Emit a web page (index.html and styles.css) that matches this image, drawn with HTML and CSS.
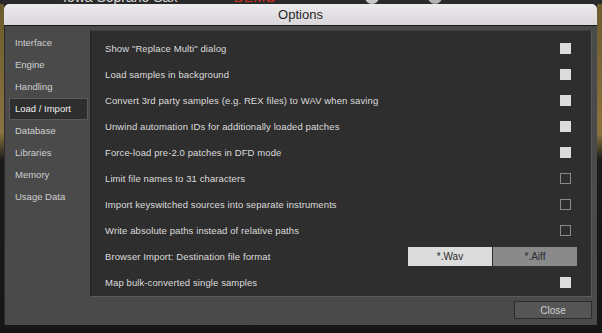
FILE: index.html
```html
<!DOCTYPE html>
<html lang="en">
<head>
  <meta charset="UTF-8">
  <title>Options</title>
  <link rel="stylesheet" href="styles.css">
</head>
<body>
  <div class="backdrop">
    <span class="bd-name">Iowa Soprano Sax</span>
    <span class="bd-demo">DEMO</span>
    <span class="bd-knob"></span>
    <span class="bd-knob second"></span>
    <span class="bd-tune">Tune</span>
  </div>

  <div class="window">
    <div class="titlebar">Options</div>
    <div class="window-body">
      <div class="main">
        <ul class="sidebar">
          <li>Interface</li>
          <li>Engine</li>
          <li>Handling</li>
          <li class="active">Load / Import</li>
          <li>Database</li>
          <li>Libraries</li>
          <li>Memory</li>
          <li>Usage Data</li>
        </ul>

        <div class="panel">
          <div class="row"><span>Show "Replace Multi" dialog</span><span class="check on"></span></div>
          <div class="row"><span>Load samples in background</span><span class="check on"></span></div>
          <div class="row"><span>Convert 3rd party samples (e.g. REX files) to WAV when saving</span><span class="check on"></span></div>
          <div class="row"><span>Unwind automation IDs for additionally loaded patches</span><span class="check on"></span></div>
          <div class="row"><span>Force-load pre-2.0 patches in DFD mode</span><span class="check on"></span></div>
          <div class="row"><span>Limit file names to 31 characters</span><span class="check"></span></div>
          <div class="row"><span>Import keyswitched sources into separate instruments</span><span class="check"></span></div>
          <div class="row"><span>Write absolute paths instead of relative paths</span><span class="check"></span></div>
          <div class="row format"><span>Browser Import: Destination file format</span>
            <div class="segmented">
              <button class="seg selected">*.Wav</button>
              <button class="seg">*.Aiff</button>
            </div>
          </div>
          <div class="row"><span>Map bulk-converted single samples</span><span class="check on"></span></div>
        </div>
      </div>

      <div class="footer">
        <button class="close">Close</button>
      </div>
    </div>
  </div>
</body>
</html>
```

FILE: styles.css
```css
body {
  margin: 0;
  width: 602px;
  height: 333px;
  overflow: hidden;
  background: linear-gradient(to bottom, #6b5a2c 0, #8a7440 40%, #1b1b1b 48%, #161616 100%);
  font-family: "Liberation Sans", Arial, sans-serif;
  position: relative;
}
.backdrop {
  height: 4px;
  overflow: hidden;
  background: #2a2a2a;
  position: relative;
  font-size: 14px;
  line-height: 14px;
}
.bd-name {
  position: absolute;
  left: 63px;
  top: -10px;
  color: #d8d8d8;
}
.bd-demo {
  position: absolute;
  left: 234px;
  top: -10px;
  color: #d03020;
}
.bd-knob {
  position: absolute;
  left: 365px;
  top: -10px;
  width: 14px;
  height: 14px;
  border-radius: 50%;
  background: #c8c8c8;
}
.bd-knob.second {
  left: 428px;
  background: #b0b0b0;
}
.bd-tune {
  position: absolute;
  left: 465px;
  top: -8px;
  font-size: 10px;
  line-height: 10px;
  color: #ddd;
}
.window {
  margin-left: 4px;
  width: 593px;
  background: #111;
}
.titlebar {
  height: 21px;
  line-height: 22px;
  text-align: center;
  font-size: 13px;
  color: #262626;
  background: linear-gradient(#eceaec, #d9d7d9);
  border-radius: 5px 5px 0 0;
  border-bottom: 1px solid #1a1a1a;
}
.window-body {
  background: #4a4a4a;
  border-left: 1px solid #2a2a2a;
  height: 299px;
  color: #d6d6d6;
  font-size: 9.5px;
}
.main {
  display: flex;
  padding-top: 4px;
}
.sidebar {
  list-style: none;
  margin: 0;
  padding: 2px 0 0 4px;
  width: 81px;
}
.sidebar li {
  height: 22px;
  line-height: 21px;
  padding-left: 6px;
  box-sizing: border-box;
  color: #cfcfcf;
}
.sidebar li.active {
  background: #2e2e2e;
  border: 1px solid #5a5a5a;
  padding-left: 5px;
  line-height: 19px;
  color: #eee;
  width: 79px;
}
.panel {
  width: 502px;
  height: 267px;
  box-sizing: border-box;
  background: #2e2e2e;
  border-top: 1px solid #3c3c3c;
  border-right: 1px solid #5a5a5a;
  border-bottom: 1px solid #5a5a5a;
  border-left: 1px solid #252525;
  padding: 4px 20px 0 14px;
}
.row {
  height: 26px;
  display: flex;
  align-items: center;
  justify-content: space-between;
  color: #dcdcdc;
  letter-spacing: 0.1px;
}
.check {
  width: 11px;
  height: 11px;
  box-sizing: border-box;
  border: 1px solid #8a8a8a;
}
.check.on {
  background: #dcdcdc;
  border-color: #dcdcdc;
}
.row.format {
  margin-right: -6px;
}
.segmented {
  display: flex;
  gap: 1px;
}
.seg {
  width: 84px;
  height: 19px;
  border: none;
  padding: 0;
  font-family: "Liberation Sans", Arial, sans-serif;
  font-size: 10px;
  color: #2a2a2a;
  background: #8a8a8a;
}
.seg.selected {
  background: #dcdcdc;
}
.footer {
  display: flex;
  justify-content: flex-end;
  padding: 4px 5px 0 0;
}
.close {
  width: 78px;
  height: 18px;
  background: #555;
  border: 1px solid #2c2c2c;
  color: #d0d0d0;
  font-family: "Liberation Sans", Arial, sans-serif;
  font-size: 10px;
}
```
